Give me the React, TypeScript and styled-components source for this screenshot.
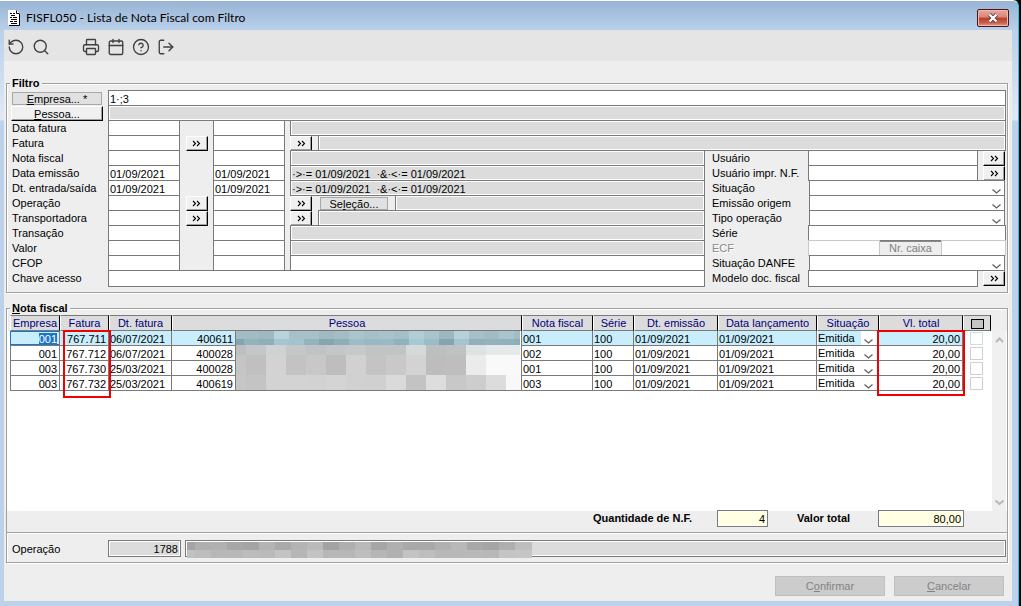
import React from 'react';
import styled, { createGlobalStyle, css } from 'styled-components';
import { RotateCcw, Search, Printer, Calendar, CircleHelp, LogOut } from 'lucide-react';

const line = '#7a7a7a';
const face = '#eeeeee';
const locked = '#dcdcdc';

const Global = createGlobalStyle`
  *, *::before, *::after { box-sizing: border-box; }
  body { margin: 0; background: #000; }
  body, button, input, select, table { font-family: "Liberation Sans", Arial, sans-serif; font-size: 11px; line-height: 13px; color: #000; }
  button, input, select { margin: 0; padding: 0; border-radius: 0; }
`;

const Window = styled.div`
  min-height: 100vh;
  display: flex;
  flex-direction: column;
  margin-right: 2px;
  padding: 0 6px 5px 4px;
  border-top: 1px solid #fff;
  border-right: 1px solid #23c4e8;
  border-top-right-radius: 6px;
  background: linear-gradient(#98b4d4 0, #b9d0ea 29px, #e0eaf6 119px, #bcd2ea 120px);
`;

const TitleBar = styled.header`
  height: 29px;
  display: flex;
  align-items: center;
  gap: 6px;
  padding: 4px 3px 0 4px;
`;

const Title = styled.h1`
  flex: 1;
  margin: 0;
  font: 400 12px/16px Lato, "Open Sans", sans-serif;
`;

const CloseButton = styled.button`
  width: 32px;
  height: 18px;
  display: flex;
  align-items: center;
  justify-content: center;
  border: 1px solid #4a1420;
  border-radius: 2px;
  background: linear-gradient(#e9a79c 0, #d98578 45%, #b93d28 50%, #c9604a 80%, #e39c86 100%);
  box-shadow: inset 0 0 0 1px #efb9ae;
`;

const Client = styled.main`
  flex: 1;
  display: flex;
  flex-direction: column;
  background: ${face};
`;

const Toolbar = styled.nav`
  height: 31px;
  display: flex;
  align-items: center;
  gap: 7px;
  padding: 3px 3px 0;
  background: #e5e5e5;
`;

const ToolButton = styled.button<{ $apart?: boolean }>`
  width: 18px;
  height: 18px;
  margin-left: ${p => (p.$apart ? '25px' : '0')};
  border: 0;
  background: none;
  color: #404040;
  svg { display: block; width: 18px; height: 18px; stroke-width: 1.8; }
`;

const Group = styled.fieldset<{ $grow?: boolean }>`
  min-width: 0;
  margin: ${p => (p.$grow ? '8px 4px 0 2px' : '15px 4px 0 2px')};
  padding: ${p => (p.$grow ? '0' : '0 1px 5px 4px')};
  border: 1px solid #a0a0a0;
  box-shadow: 1px 1px #fff, inset 1px 1px #fff;
`;

const Legend = styled.legend<{ $indent?: boolean }>`
  height: 14px;
  margin-left: ${p => (p.$indent ? '3px' : '-1px')};
  padding: 0 2px;
  font-weight: 700;
  line-height: 14px;
  background: ${face};
`;

const Line = styled.div<{ $last?: boolean }>`
  height: ${p => (p.$last ? '17px' : '15px')};
  display: flex;
  align-items: stretch;
`;

const Split = styled.div`
  display: grid;
  grid-template-columns: minmax(0, 1fr) 301px;
`;

const Caption = styled.label<{ $wide?: boolean; $off?: boolean }>`
  flex: none;
  width: ${p => (p.$wide ? '103px' : '97px')};
  padding: 2px 0 0 ${p => (p.$wide ? '7px' : '1px')};
  white-space: nowrap;
  ${p => p.$off && css`color: #8a8a8a; text-shadow: 1px 1px #fff;`}
`;

const Field = styled.input<{ $width?: number; $last?: boolean; $pale?: boolean }>`
  ${p => (p.$width ? `flex: none; width: ${p.$width}px;` : 'flex: 1; min-width: 0; width: 0;')}
  margin-bottom: ${p => (p.$last ? '0' : '-1px')};
  padding: 2px 1px 0;
  border: 1px solid ${p => (p.$pale ? '#c8c8c8' : line)};
  background: #fff;
  outline: 0;
  &:read-only { background: ${locked}; box-shadow: inset 0 0 0 1px #fff; }
  &:disabled { background: #fff; box-shadow: none; }
`;

const raised = css`
  border: 1px solid #000;
  border-top-color: #fff;
  border-left-color: #fff;
  background: #f0f0f0;
  box-shadow: inset -1px -1px #a0a0a0;
`;

const Look = styled.button`
  flex: none;
  width: 22px;
  height: 15px;
  margin-top: 1px;
  display: flex;
  align-items: center;
  justify-content: center;
  ${raised}
`;

const Slot = styled.span<{ $width: number }>`
  flex: none;
  width: ${p => p.$width}px;
  display: flex;
  justify-content: center;
`;

const FlatButton = styled.button`
  width: 90px;
  height: 13px;
  margin: 2px 6px 0 1px;
  border: 1px solid #a8a8a8;
  background: #e1e1e1;
  line-height: 12px;
`;

const RaisedButton = styled.button`
  width: 92px;
  height: 15px;
  margin: 1px 5px 0 0;
  line-height: 12px;
  ${raised}
`;

const SelectionButton = styled.button`
  flex: none;
  width: 68px;
  height: 13px;
  margin: 2px 7px 0 8px;
  border: 1px solid #a8a8a8;
  background: #e1e1e1;
  line-height: 12px;
`;

const BoxButton = styled.button`
  width: 61px;
  height: 15px;
  margin-top: 1px;
  border: 1px solid #8a8a8a;
  border-left-width: 0;
  border-right-width: 0;
  background: ${face};
  color: #808080;
`;

const Pick = styled.div`
  position: relative;
  flex: 1;
  min-width: 0;
  display: flex;
  margin-left: 1px;
  svg { position: absolute; right: 5px; bottom: 0; pointer-events: none; }
`;

const PickInput = styled.select<{ $cell?: boolean; $lit?: boolean }>`
  width: 100%;
  appearance: none;
  outline: 0;
  border: 0 solid ${line};
  background: #fff;
  ${p => !p.$cell && css`border-width: 1px; margin: 0 1px -1px 0;`}
  ${p => p.$cell && css`height: 14px; line-height: 14px;`}
  ${p => p.$lit && css`background: linear-gradient(90deg, #c8eefd 43px, #fff 43px);`}
`;

const Grid = styled.div`
  min-height: calc(100vh - 410px);
  display: grid;
  grid-template-columns: minmax(0, 1fr) 14px;
  grid-template-rows: 16px 1fr;
  padding-right: 1px;
  margin-left: 1px;
  background: linear-gradient(${face} 16px, #fff 16px);
`;

const TableHolder = styled.div`
  grid-row: 1 / 3;
  padding: 0 1px 0 2px;
`;

const Table = styled.table`
  width: 100%;
  table-layout: fixed;
  border-collapse: separate;
  border-spacing: 0;
`;

const Head = styled.th`
  height: 16px;
  padding: 1px 0 0;
  overflow: hidden;
  border: 1px solid ${line};
  border-left-color: #fff;
  border-right-color: #000;
  background: ${locked};
  font-weight: 400;
  color: #00007c;
  white-space: nowrap;
`;

const Cell = styled.td<{ $right?: boolean; $lit?: boolean }>`
  position: relative;
  height: 15px;
  padding: 2px 2px 0 1px;
  border-right: 1px solid ${line};
  border-bottom: 1px solid ${line};
  text-align: ${p => (p.$right ? 'right' : 'left')};
  line-height: 12px;
  background: ${p => (p.$lit ? '#c8eefd' : '#fff')};
  white-space: nowrap;
`;

const FirstCell = styled(Cell)<{ $active?: boolean }>`
  border-left: 1px solid ${line};
  ${p => p.$active && css`border-left-color: #1b76c8; box-shadow: inset 0 1px #1b76c8, inset 0 -1px #1b76c8;`}
  mark { background: #1b76c8; color: #fff; }
`;

const PlainCell = styled(Cell)`
  padding: 0;
`;

const TickCell = styled.td`
  padding: 0 0 0 7px;
  line-height: 0;
`;

const Tick = styled.input<{ $lit?: boolean }>`
  appearance: none;
  display: block;
  width: 13px;
  height: 13px;
  margin: 0;
  border: 1px solid ${p => (p.$lit ? '#c6dfe9' : '#d0d0d0')};
  background: #fff;
`;

const HeadTick = styled(Tick)`
  height: 10px;
  margin: 0 auto;
  border-color: #000;
  background: #c4c4c4;
`;

const Highlight = styled.span<{ $width: number; $height: number }>`
  position: absolute;
  z-index: 2;
  top: -1px;
  right: -3px;
  width: ${p => p.$width}px;
  height: ${p => p.$height}px;
  border: 2px solid #f00000;
  pointer-events: none;
`;

const ScrollTrack = styled.div`
  grid-column: 2;
  grid-row: 2;
  display: flex;
  flex-direction: column;
  justify-content: space-between;
  align-items: center;
  padding: 6px 0 5px;
  background: #f0f0f0;
`;

const Totals = styled.div`
  height: 22px;
  display: flex;
  align-items: flex-start;
  justify-content: flex-end;
  padding-right: 43px;
  border-bottom: 1px solid #a0a0a0;
  background: ${face};
`;

const TotalLabel = styled.label<{ $width: number }>`
  width: ${p => p.$width}px;
  padding-top: 1px;
  font-weight: 700;
`;

const TotalInput = styled.input<{ $width: number; $gap?: number }>`
  width: ${p => p.$width}px;
  height: 17px;
  margin: -1px ${p => p.$gap || 0}px 0 0;
  padding: 1px 2px 0;
  border: 1px solid ${line};
  background: #ffffe1;
  box-shadow: inset 0 0 0 1px #fff;
  text-align: right;
  outline: 0;
`;

const Operation = styled.div`
  height: 29px;
  display: flex;
  align-items: center;
  padding: 1px 1px 0 4px;
  box-shadow: inset 0 1px #fff;
`;

const ReadOut = styled.input<{ $width?: number }>`
  ${p => (p.$width ? `flex: none; width: ${p.$width}px;` : 'width: 100%;')}
  height: 17px;
  padding: 2px 2px 0;
  border: 1px solid ${line};
  background: ${locked};
  box-shadow: inset 0 0 0 1px #fff;
  text-align: right;
  outline: 0;
`;

const Masked = styled.div`
  position: relative;
  flex: 1;
  min-width: 0;
  display: flex;
  margin-left: 4px;
  svg { position: absolute; left: 2px; top: 2px; }
`;

const MosaicArt = styled.svg`
  display: block;
`;

const Footer = styled.footer`
  display: flex;
  justify-content: flex-end;
  gap: 9px;
  margin-top: auto;
  padding: 12px 8px 5px;
`;

const FooterButton = styled.button`
  width: 110px;
  height: 20px;
  border: 1px solid #bfbfbf;
  background: #cccccc;
  color: #838383;
`;

const Chevron = ({ up, pale }: { up?: boolean; pale?: boolean }) => (
  <svg width="9" height="7" viewBox="0 0 9 7" fill="none" stroke={pale ? '#b8b8b8' : '#606060'} strokeWidth={pale ? 2 : 1.3}>
    <path d={up ? 'M1 5 L4.5 1.5 L8 5' : 'M0.5 1.5 L4.5 5 L8.5 1.5'} />
  </svg>
);

const Arrows = ({ label }: { label: string }) => (
  <Look type="button" aria-label={`Procurar ${label}`}>
    <svg width="9" height="7" viewBox="0 0 9 7" fill="none" stroke="#000" strokeWidth="1.1">
      <path d="M1 1 L3.5 3.5 L1 6 M5 1 L7.5 3.5 L5 6" />
    </svg>
  </Look>
);

const Choice = ({ id }: { id: string }) => (
  <Pick>
    <PickInput id={id}><option value="" /></PickInput>
    <Chevron />
  </Pick>
);

type RangeProps = { label: string; id: string; value?: string; look?: boolean; children: React.ReactNode };

const RangeLine = ({ label, id, value = '', look, children }: RangeProps) => (
  <Line>
    <Caption htmlFor={id}>{label}</Caption>
    <Field id={id} $width={72} defaultValue={value} />
    <Slot $width={33}>{look && <Arrows label={label} />}</Slot>
    <Field $width={72} defaultValue={value} aria-label={`${label} final`} />
    <Slot $width={5} />
    {children}
  </Line>
);

const Expression = ({ value = '' }: { value?: string }) => (
  <Field readOnly defaultValue={value} aria-label="Expressão" />
);

const UserLine = ({ label, id, last }: { label: string; id: string; last?: boolean }) => (
  <Line $last={last}>
    <Caption $wide htmlFor={id}>{label}</Caption>
    <Field id={id} $width={170} $last={last} />
    <Slot $width={5} />
    <Arrows label={label} />
  </Line>
);

const ChoiceLine = ({ label, id }: { label: string; id: string }) => (
  <Line>
    <Caption $wide htmlFor={id}>{label}</Caption>
    <Choice id={id} />
  </Line>
);

type Band = { y: number; h: number; step: number; colors: string[] };

const Mosaic = ({ width, height, bands }: { width: number; height: number; bands: Band[] }) => (
  <MosaicArt width={width} height={height} viewBox={`0 0 ${width} ${height}`} shapeRendering="crispEdges" aria-hidden="true">
    {bands.map(b =>
      b.colors.map((c, i) => {
        const x = i === 0 ? 0 : i * b.step - b.step / 2;
        return <rect key={`${b.y}-${i}`} x={x} y={b.y} width={b.step + 1} height={b.h} fill={c} />;
      })
    )}
  </MosaicArt>
);

const nameBands: Band[] = [
  { y: 0, h: 8, step: 15, colors: ['#a2bcc3', '#a2bcc3', '#9fb9c0', '#b7d3dc', '#a7c1c9', '#a7c1c9', '#a0bac2', '#a3bdc5', '#abc5cd', '#a5c0c8', '#a9c3cb', '#a3bfc7', '#b2cdd5', '#a8c4cc', '#9db7bf', '#b5d1da', '#a7c0c8', '#a2bcc4', '#a8c4cc', '#a2bcc3'] },
  { y: 8, h: 6, step: 15, colors: ['#86a4ad', '#93b3bc', '#8fafb8', '#a3c6d1', '#a1c4cf', '#94b4bd', '#87a5ae', '#8fafb8', '#9bbdc7', '#98b9c3', '#99bac4', '#92b2bb', '#a6cad5', '#9bbdc7', '#85a4ad', '#a2c5cf', '#91b1ba', '#93b3bc', '#92b2bb', '#8fafb8'] },
  { y: 14, h: 10, step: 20, colors: ['#bcbfc0', '#c4c7c8', '#ced2d3', '#c5c8c9', '#bfc3c4', '#c4c7c8', '#c5c9ca', '#c0c4c5', '#c0c4c5', '#d4d9da', '#bbbfc0', '#bec2c3', '#dde2e3', '#e4e9ea', '#e4e9ea'] },
  { y: 24, h: 20, step: 20, colors: ['#c5c5c5', '#c0c0c0', '#d3d3d3', '#c3c3c3', '#c8c8c8', '#bebebe', '#d1d1d1', '#c4c4c4', '#c9c9c9', '#d3d3d3', '#bdbdbd', '#bebebe', '#ebebeb', '#f9f9f9', '#f9f9f9'] },
  { y: 44, h: 16, step: 20, colors: ['#c6c6c6', '#c4c4c4', '#d3d3d3', '#d3d3d3', '#d2d2d2', '#d4d4d4', '#d1d1d1', '#d0d0d0', '#dadada', '#c3c3c3', '#dddddd', '#c8c8c8', '#cdcdcd', '#dcdcdc', '#f8f8f8'] },
];

const operationBands: Band[] = [
  { y: 0, h: 8, step: 16, colors: ['#a4a4a4', '#afafaf', '#b1b1b1', '#a7a7a7', '#a4a4a4', '#b4b4b4', '#aaaaaa', '#b4b4b4', '#bababa', '#a3a3a3', '#afafaf', '#b9b9b9', '#a6a6a6', '#b0b0b0', '#a9a9a9', '#a9a9a9', '#b1b1b1', '#b8b8b8', '#a8a8a8', '#a5a5a5', '#afafaf', '#bebebe'] },
  { y: 8, h: 8, step: 16, colors: ['#c1c1c1', '#bdbdbd', '#b7b7b7', '#b8b8b8', '#bcbcbc', '#bababa', '#c3c3c3', '#b6b6b6', '#c3c3c3', '#b7b7b7', '#b7b7b7', '#bebebe', '#b6b6b6', '#b1b1b1', '#c3c3c3', '#bebebe', '#b8b8b8', '#b8b8b8', '#b9b9b9', '#b7b7b7', '#c4c4c4', '#c6c6c6'] },
];

const rows = [
  { company: '001', invoice: '767.711', date: '06/07/2021', person: '400611', note: '001' },
  { company: '001', invoice: '767.712', date: '06/07/2021', person: '400028', note: '002' },
  { company: '003', invoice: '767.730', date: '25/03/2021', person: '400028', note: '001' },
  { company: '003', invoice: '767.732', date: '25/03/2021', person: '400619', note: '003' },
];

const columnWidths = [50, 49, 63, 64, 0, 71, 41, 84, 99, 62, 84, 28];
const period = '·>·= 01/09/2021  ·&·<·= 01/09/2021';

export default function App() {
  return (
    <>
      <Global />
      <Window>
        <TitleBar>
          <svg width="12" height="16" viewBox="0 0 12 16" aria-hidden="true">
            <path d="M0.5 0.5 H8.5 L11.5 3.5 V15.5 H0.5 Z" fill="#fff" stroke="#fff" />
            <path d="M11.5 4 V15.5 H1" fill="none" stroke="#000" />
            <path d="M8.5 0.5 V3.5 H11.5" fill="none" stroke="#000" />
            <path d="M2 3.5 H4 M5 3.5 H7 M3 5.5 H7 M2 7.5 H4 M5 7.5 H9 M3 9.5 H9 M2 11.5 H5 M6 11.5 H9 M3 13.5 H9" stroke="#000" />
          </svg>
          <Title>FISFL050 - Lista de Nota Fiscal com Filtro</Title>
          <CloseButton type="button" aria-label="Fechar">
            <svg width="12" height="10" viewBox="0 0 12 10" fill="none">
              <path d="M2.5 1.5 L9.5 8.5 M9.5 1.5 L2.5 8.5" stroke="#5b3c46" strokeWidth="4" />
              <path d="M2.5 1.5 L9.5 8.5 M9.5 1.5 L2.5 8.5" stroke="#fff" strokeWidth="2.4" />
            </svg>
          </CloseButton>
        </TitleBar>

        <Client>
          <Toolbar aria-label="Ferramentas">
            <ToolButton type="button" aria-label="Desfazer"><RotateCcw /></ToolButton>
            <ToolButton type="button" aria-label="Pesquisar"><Search /></ToolButton>
            <ToolButton type="button" aria-label="Imprimir" $apart><Printer /></ToolButton>
            <ToolButton type="button" aria-label="Calendário"><Calendar /></ToolButton>
            <ToolButton type="button" aria-label="Ajuda"><CircleHelp /></ToolButton>
            <ToolButton type="button" aria-label="Sair"><LogOut /></ToolButton>
          </Toolbar>

          <Group>
            <Legend>Filtro</Legend>
            <Line>
              <FlatButton type="button"><u>E</u>mpresa... *</FlatButton>
              <Field defaultValue="1·;3" aria-label="Empresa" />
            </Line>
            <Line>
              <RaisedButton type="button"><u>P</u>essoa...</RaisedButton>
              <Field readOnly aria-label="Pessoa" />
            </Line>
            <RangeLine label="Data fatura" id="data-fatura"><Expression /></RangeLine>
            <RangeLine label="Fatura" id="fatura" look>
              <Arrows label="Fatura final" />
              <Slot $width={6} />
              <Expression />
            </RangeLine>
            <Split>
              <div>
                <RangeLine label="Nota fiscal" id="nota-fiscal"><Expression /></RangeLine>
                <RangeLine label="Data emissão" id="data-emissao" value="01/09/2021"><Expression value={period} /></RangeLine>
                <RangeLine label="Dt. entrada/saída" id="data-entrada" value="01/09/2021"><Expression value={period} /></RangeLine>
                <RangeLine label="Operação" id="operacao" look>
                  <Arrows label="Operação final" />
                  <SelectionButton type="button">Se<u>l</u>eção...</SelectionButton>
                  <Expression />
                </RangeLine>
                <RangeLine label="Transportadora" id="transportadora" look>
                  <Arrows label="Transportadora final" />
                  <Slot $width={6} />
                  <Expression />
                </RangeLine>
                <RangeLine label="Transação" id="transacao"><Expression /></RangeLine>
                <RangeLine label="Valor" id="valor"><Expression /></RangeLine>
                <RangeLine label="CFOP" id="cfop"><Field aria-label="Lista de CFOP" /></RangeLine>
                <Line $last>
                  <Caption htmlFor="chave">Chave acesso</Caption>
                  <Field id="chave" $last />
                </Line>
              </div>
              <div>
                <UserLine label="Usuário" id="usuario" />
                <UserLine label="Usuário impr. N.F." id="usuario-impr" />
                <ChoiceLine label="Situação" id="situacao" />
                <ChoiceLine label="Emissão origem" id="emissao-origem" />
                <ChoiceLine label="Tipo operação" id="tipo-operacao" />
                <Line>
                  <Caption $wide htmlFor="serie">Série</Caption>
                  <Field id="serie" />
                </Line>
                <Line>
                  <Caption $wide $off htmlFor="ecf">ECF</Caption>
                  <Field id="ecf" $width={72} $pale disabled />
                  <BoxButton type="button" disabled>Nr. caixa</BoxButton>
                  <Field $pale disabled aria-label="Número da caixa" />
                </Line>
                <ChoiceLine label="Situação DANFE" id="situacao-danfe" />
                <UserLine label="Modelo doc. fiscal" id="modelo" last />
              </div>
            </Split>
          </Group>

          <Group $grow>
            <Legend $indent><u>N</u>ota fiscal</Legend>
            <Grid>
              <TableHolder>
                <Table>
                  <colgroup>
                    {columnWidths.map((w, i) => <col key={i} style={w ? { width: w } : undefined} />)}
                  </colgroup>
                  <thead>
                    <tr>
                      <Head>Empresa</Head>
                      <Head>Fatura</Head>
                      <Head>Dt. fatura</Head>
                      <Head colSpan={2}>Pessoa</Head>
                      <Head>Nota fiscal</Head>
                      <Head>Série</Head>
                      <Head>Dt. emissão</Head>
                      <Head>Data lançamento</Head>
                      <Head>Situação</Head>
                      <Head>Vl. total</Head>
                      <Head><HeadTick type="checkbox" aria-label="Marcar todas" /></Head>
                    </tr>
                  </thead>
                  <tbody>
                    {rows.map((r, i) => {
                      const lit = i === 0;
                      return (
                        <tr key={r.invoice}>
                          <FirstCell $right $lit={lit} $active={lit}>{lit ? <mark>{r.company}</mark> : r.company}</FirstCell>
                          <Cell $right $lit={lit}>
                            {r.invoice}
                            {lit && <Highlight $width={48} $height={68} />}
                          </Cell>
                          <Cell $lit={lit}>{r.date}</Cell>
                          <Cell $right $lit={lit}>{r.person}</Cell>
                          {lit && (
                            <PlainCell rowSpan={4}>
                              <Mosaic width={284} height={59} bands={nameBands} />
                            </PlainCell>
                          )}
                          <Cell $lit={lit}>{r.note}</Cell>
                          <Cell $lit={lit}>100</Cell>
                          <Cell $lit={lit}>01/09/2021</Cell>
                          <Cell $lit={lit}>01/09/2021</Cell>
                          <PlainCell>
                            <Pick>
                              <PickInput $cell $lit={lit} aria-label={`Situação ${r.invoice}`}><option>Emitida</option></PickInput>
                              <Chevron />
                            </Pick>
                          </PlainCell>
                          <Cell $right $lit={lit}>
                            20,00
                            {lit && <Highlight $width={88} $height={66} />}
                          </Cell>
                          <TickCell><Tick type="checkbox" $lit={lit} aria-label={`Marcar ${r.invoice}`} /></TickCell>
                        </tr>
                      );
                    })}
                  </tbody>
                </Table>
              </TableHolder>
              <ScrollTrack><Chevron up pale /><Chevron pale /></ScrollTrack>
            </Grid>
            <Totals>
              <TotalLabel $width={124} htmlFor="quantidade">Quantidade de N.F.</TotalLabel>
              <TotalInput id="quantidade" $width={51} $gap={29} readOnly defaultValue="4" />
              <TotalLabel $width={81} htmlFor="valor-total">Valor total</TotalLabel>
              <TotalInput id="valor-total" $width={86} readOnly defaultValue="80,00" />
            </Totals>
            <Operation>
              <Caption htmlFor="op-codigo">Operação</Caption>
              <ReadOut id="op-codigo" $width={73} readOnly defaultValue="1788" />
              <Masked>
                <ReadOut readOnly aria-label="Descrição da operação" />
                <Mosaic width={345} height={16} bands={operationBands} />
              </Masked>
            </Operation>
          </Group>

          <Footer>
            <FooterButton type="button" disabled>C<u>o</u>nfirmar</FooterButton>
            <FooterButton type="button" disabled><u>C</u>ancelar</FooterButton>
          </Footer>
        </Client>
      </Window>
    </>
  );
}
